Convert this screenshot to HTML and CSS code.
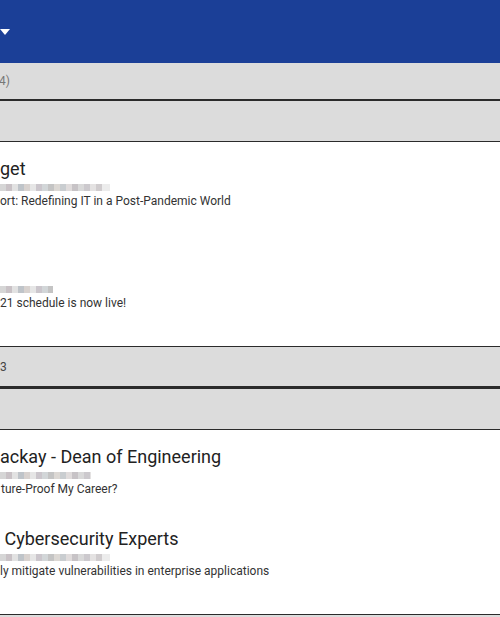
FILE: index.html
```html
<!DOCTYPE html>
<html lang="en">
<head>
    <meta charset="UTF-8">
    <meta name="viewport" content="width=device-width, initial-scale=1.0">
    <title>Sessions</title>
    <link rel="stylesheet" href="styles.css">
</head>
<body>
    <header class="topbar">
        <span class="caret"></span>
    </header>

    <div class="group-bar first">4)</div>
    <div class="sub-bar"></div>
    <ul class="items">
        <li class="item">
            <div class="title">get</div>
            <div class="blur w110"></div>
            <div class="desc">ort: Redefining IT in a Post-Pandemic World</div>
        </li>
        <li class="item">
            <div class="title tall"></div>
            <div class="blur w53"></div>
            <div class="desc">21 schedule is now live!</div>
        </li>
    </ul>

    <div class="group-bar num">3</div>
    <div class="sub-bar"></div>
    <ul class="items">
        <li class="item">
            <div class="title">ackay - Dean of Engineering</div>
            <div class="blur w91"></div>
            <div class="desc shift">ture-Proof My Career?</div>
        </li>
        <li class="item">
            <div class="title">&nbsp;Cybersecurity Experts</div>
            <div class="blur w110"></div>
            <div class="desc">ly mitigate vulnerabilities in enterprise applications</div>
        </li>
    </ul>
    <div class="sub-bar"></div>
</body>
</html>
```

FILE: styles.css
```css
body {
    margin: 0;
    font-family: Roboto, 'Liberation Sans', sans-serif;
    color: #222;
    overflow: hidden;
}
.topbar {
    height: 63px;
    background-color: #1b3f97;
    display: flex;
    align-items: center;
}
.caret {
    width: 0;
    height: 0;
    border-left: 5px solid transparent;
    border-right: 5px solid transparent;
    border-top: 6px solid #fff;
}
.group-bar {
    height: 39px;
    background-color: #dcdcdc;
    border-top: 1px solid #2b2b2b;
    border-bottom: 3px solid #2b2b2b;
    font-size: 12px;
    display: flex;
    align-items: center;
}
.group-bar.first {
    height: 36px;
    border-top: none;
    border-bottom-width: 2px;
    color: #777;
    text-indent: -1px;
}
.group-bar.num {
    color: #444;
}
.sub-bar {
    height: 40px;
    background-color: #dcdcdc;
    border-bottom: 1px solid #2b2b2b;
}
.items {
    list-style: none;
    margin: 0;
    padding: 16px 0 36px;
    border-bottom: 1px solid #2b2b2b;
}
.items + .group-bar {
    border-top: none;
}
.item + .item {
    margin-top: 32px;
}
.title {
    font-size: 18px;
    line-height: 22px;
    height: 22px;
    white-space: nowrap;
}
.title.tall {
    height: 42px;
}
.blur {
    height: 7px;
    margin: 4px 0 3px;
    background: linear-gradient(90deg,
        #d6d6d6 0 6px, #c9c2c6 6px 12px, #e2e2e2 12px 18px, #bfc4c9 18px 24px,
        #d8d2cf 24px 30px, #e6e6e6 30px 36px, #cbc6cc 36px 42px, #d2d6d8 42px 48px,
        #c4c4c4 48px 54px, #dcd8d4 54px 60px, #c9cdd0 60px 66px, #e0dcdc 66px 72px,
        #c7c3c6 72px 78px, #d9d9d9 78px 84px, #ccc9cd 84px 90px, #e4e2e2 90px 96px,
        #d0ccce 96px 102px, #ececec 102px 110px);
}
.w110 { width: 110px; }
.w91 { width: 91px; }
.w53 { width: 53px; }
.desc {
    font-size: 12px;
    line-height: 14px;
    color: #333;
    white-space: nowrap;
}
.desc.shift {
    padding-left: 1px;
}
```
